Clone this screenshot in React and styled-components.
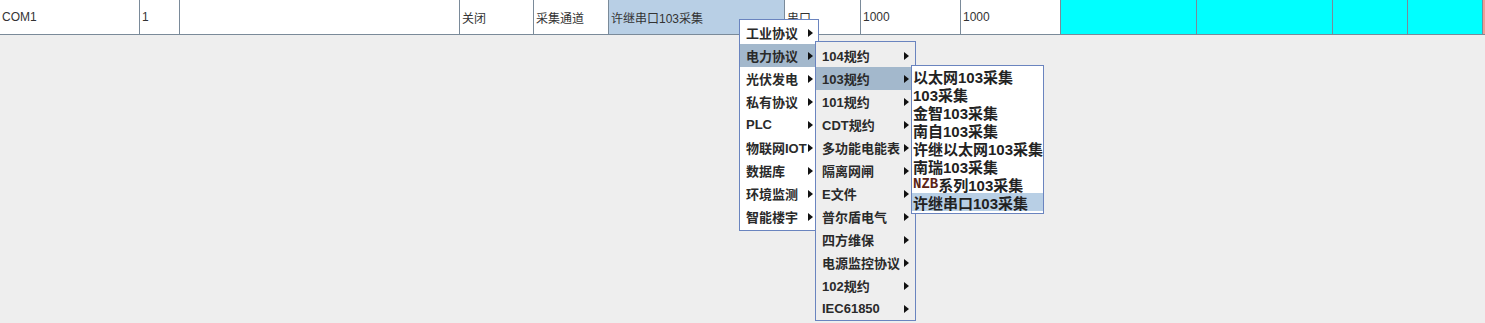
import React from "react";
import styled, { createGlobalStyle } from "styled-components";

const GlobalStyle = createGlobalStyle`
  html, body {
    margin: 0;
    padding: 0;
    background: #eeeeee;
  }
  * {
    box-sizing: border-box;
  }
`;

const columns = [
  { w: 140, text: "COM1" },
  { w: 40, text: "1" },
  { w: 280, text: "" },
  { w: 74, text: "关闭" },
  { w: 75, text: "采集通道" },
  { w: 176, text: "许继串口103采集", selected: true },
  { w: 76, text: "串口" },
  { w: 100, text: "1000" },
  { w: 100, text: "1000" },
  { w: 136, text: "", bg: "#00ffff" },
  { w: 136, text: "", bg: "#00ffff" },
  { w: 75, text: "", bg: "#00ffff" },
  { w: 75, text: "", bg: "#00ffff" },
  { w: 40, text: "", bg: "#ef9f95" },
];

const protocolMenu = [
  "工业协议",
  "电力协议",
  "光伏发电",
  "私有协议",
  "PLC",
  "物联网IOT",
  "数据库",
  "环境监测",
  "智能楼宇",
];

const powerMenu = [
  "104规约",
  "103规约",
  "101规约",
  "CDT规约",
  "多功能电能表",
  "隔离网闸",
  "E文件",
  "普尔盾电气",
  "四方维保",
  "电源监控协议",
  "102规约",
  "IEC61850",
];

const collectMenu = [
  "以太网103采集",
  "103采集",
  "金智103采集",
  "南自103采集",
  "许继以太网103采集",
  "南瑞103采集",
  "NZB系列103采集",
  "许继串口103采集",
];

export default function App() {
  return (
    <Page>
      <GlobalStyle />
      <TableRow>
        {columns.map((col, i) => (
          <Cell
            key={i}
            $w={col.w}
            $bg={col.selected ? "#b8cfe5" : col.bg || "#ffffff"}
          >
            {col.text}
          </Cell>
        ))}
      </TableRow>

      <Menu $left={739} $top={19} $width={80} $bg="#ffffff" $pt={1} $pb={2}>
        {protocolMenu.map((label) => (
          <MenuItem key={label} $active={label === "电力协议"} $h={23} $px={6} $pr={5}>
            <span>{label}</span>
            <Arrow />
          </MenuItem>
        ))}
      </Menu>

      <Menu $left={815} $top={41} $width={101} $bg="#eeeeee" $pt={2} $pb={0}>
        {powerMenu.map((label) => (
          <MenuItem key={label} $active={label === "103规约"} $h={23} $px={6} $pr={6}>
            <span>{label}</span>
            <Arrow />
          </MenuItem>
        ))}
      </Menu>

      <Menu $left={911} $top={65} $width={133} $bg="#ffffff" $pt={1} $pb={2}>
        {collectMenu.map((label) => (
          <CollectItem key={label} $active={label === "许继串口103采集"}>
            {label.startsWith("NZB") ? (
              <>
                <Mono>NZB</Mono>
                {label.slice(3)}
              </>
            ) : (
              label
            )}
          </CollectItem>
        ))}
      </Menu>
    </Page>
  );
}

const Page = styled.div`
  position: relative;
  width: 100vw;
  height: 100vh;
  overflow: hidden;
  background: #eeeeee;
`;

const TableRow = styled.div`
  display: flex;
  height: 35px;
  border-bottom: 1px solid #7a8a99;
  white-space: nowrap;
`;

const Cell = styled.div`
  flex: 0 0 ${(p) => p.$w}px;
  height: 34px;
  padding-left: 2px;
  display: flex;
  align-items: center;
  background: ${(p) => p.$bg};
  border-right: 1px solid #7a8a99;
  font-family: "Liberation Sans", "Noto Sans CJK SC", sans-serif;
  font-size: 12px;
  color: #333333;
  overflow: hidden;
`;

const Menu = styled.div`
  position: absolute;
  left: ${(p) => p.$left}px;
  top: ${(p) => p.$top}px;
  width: ${(p) => p.$width}px;
  background: ${(p) => p.$bg};
  border: 1px solid #6a84bf;
  padding: ${(p) => p.$pt}px 0 ${(p) => p.$pb}px 0;
  display: flex;
  flex-direction: column;
`;

const MenuItem = styled.div`
  height: ${(p) => p.$h}px;
  padding: 0 ${(p) => p.$pr}px 0 ${(p) => p.$px}px;
  display: flex;
  align-items: center;
  justify-content: space-between;
  background: ${(p) => (p.$active ? "#a3b8cc" : "transparent")};
  font-family: "Liberation Sans", "Noto Sans CJK SC", sans-serif;
  font-weight: bold;
  font-size: 13px;
  color: #2a2a2a;
  white-space: nowrap;
`;

const Arrow = styled.i`
  width: 0;
  height: 0;
  border-top: 4px solid transparent;
  border-bottom: 4px solid transparent;
  border-left: 5px solid #111111;
`;

const CollectItem = styled.div`
  height: 18px;
  padding-left: 1px;
  display: flex;
  align-items: center;
  background: ${(p) => (p.$active ? "#b8cfe5" : "transparent")};
  font-family: "Liberation Sans", "Noto Sans CJK SC", sans-serif;
  font-weight: bold;
  font-size: 15px;
  color: #222222;
  white-space: nowrap;
`;

const Mono = styled.span`
  font-family: "Liberation Mono", monospace;
  font-weight: bold;
  font-size: 14px;
  color: #5a2418;
`;
